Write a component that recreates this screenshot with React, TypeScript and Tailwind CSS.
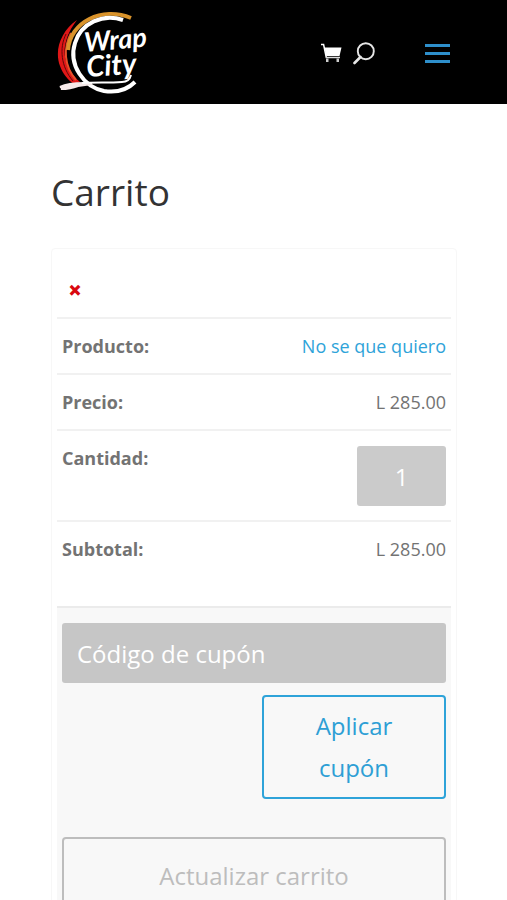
import { useState } from 'react';

interface CartItem {
  name: string;
  price: string;
  subtotal: string;
}

const item: CartItem = {
  name: 'No se que quiero',
  price: 'L 285.00',
  subtotal: 'L 285.00',
};

function Logo() {
  return (
    <svg width="98" height="88" viewBox="57 9 98 88" fill="none" role="img" aria-label="Wrap City">
      {/* red and orange swooshes */}
      <path d="M77 20C61 31 54 50 60 66c3 8 8 14 14 18l6-2C68 72 63 58 65 46c2-11 6-18 12-26Z" fill="#e01717" />
      <path d="M66 34C59 48 61 67 73 81" stroke="#5e0808" strokeWidth="1" />
      <path d="M76 80C64 66 63 48 71 33" stroke="#e8502a" strokeWidth="2" />
      <path d="M68 50C70 22 102 6 131 18" stroke="#d9932b" strokeWidth="4" />
      {/* ring */}
      <path d="M123 20C103 13 81 23 75 43 68 65 84 87 104 91c13 2 24-2 31-9" stroke="#fff" strokeWidth="4" />
      {/* feather */}
      <path d="M60 87c6-3 14-4 24-4l8 1-14 2c-5 2-10 3-17 3l5-2Z" fill="#f6e9e9" stroke="#f6e9e9" strokeWidth="2" />
      <path d="M82 83c13-1 26 0 40-1 5 0 8-3 9-7" stroke="#fff" strokeWidth="2" />
      <g
        fill="#fff"
        fontFamily="Lato, 'Liberation Sans', sans-serif"
        fontStyle="italic"
        fontWeight="700"
      >
        <text x="85" y="52" fontSize="27" transform="rotate(-5 85 52)">Wrap</text>
        <text x="87" y="77" fontSize="29" transform="rotate(-4 87 77)">City</text>
      </g>
    </svg>
  );
}

function CartIcon() {
  return (
    <svg width="22" height="20" viewBox="0 0 22 20" fill="none" aria-hidden="true">
      <path d="M0 1.5h2.6L5.4 15" stroke="#fff" strokeWidth="1.5" />
      <path d="M3.5 4.5H20.5L18.5 13H5.2Z" fill="#fff" />
      <path d="M5 14.5h14" stroke="#ddd" strokeWidth="1.5" />
      <path d="M5 15.5h2.5V19H5ZM15.5 15.5H18V19h-2.5Z" fill="#ccc" />
    </svg>
  );
}

function SearchIcon() {
  return (
    <svg width="22" height="23" viewBox="0 0 22 23" fill="none" stroke="#e6e6e6" aria-hidden="true">
      <circle cx="12.8" cy="9.2" r="8" strokeWidth="1.9" />
      <path d="M7.5 15 1.5 21" strokeWidth="2.6" strokeLinecap="round" />
    </svg>
  );
}

function Header() {
  return (
    <header className="flex h-[104px] items-center justify-between bg-black px-[57px] pt-[2px]">
      <a href="#inicio" aria-label="Wrap City">
        <Logo />
      </a>
      <nav className="flex items-center">
        <a href="#carrito" aria-label="Carrito">
          <CartIcon />
        </a>
        <button type="button" aria-label="Buscar" className="ml-[10px]">
          <SearchIcon />
        </button>
        <button type="button" aria-label="Menú" className="ml-[50px] flex w-[25px] flex-col gap-[5px]">
          <span className="h-[3px] bg-[#2e8fcb]" />
          <span className="h-[3px] bg-[#2e8fcb]" />
          <span className="h-[3px] bg-[#2e8fcb]" />
        </button>
      </nav>
    </header>
  );
}

export default function App() {
  const [quantity, setQuantity] = useState('1');
  const [coupon, setCoupon] = useState('');

  return (
    <div className="min-h-screen bg-white font-['Open_Sans','Noto_Sans',sans-serif] text-[18px] leading-[26px] text-[#737373]">
      <Header />
      <main className="pt-16 pr-[50px] pl-[51px]">
        <h1 className="text-[37px] leading-[48px] text-[#333]">Carrito</h1>
        <form
          className="mt-8 rounded-[4px] border border-[#f7f7f7] p-[5px]"
          onSubmit={(e) => e.preventDefault()}
        >
          <table className="w-full border-separate border-spacing-0">
            <tbody>
              <tr>
                <td colSpan={2} className="h-[65px] border-b-2 border-[#f1f1f1] px-[5px] pt-2">
                  <button
                    type="button"
                    aria-label="Eliminar este artículo"
                    className="block size-[26px] text-center text-[24px] font-extrabold text-[#d9080f]"
                  >
                    ×
                  </button>
                </td>
              </tr>
              <tr>
                <th scope="row" className="border-b-2 border-[#f1f1f1] px-[5px] py-[14px] text-left font-bold">
                  Producto:
                </th>
                <td className="border-b-2 border-[#f1f1f1] px-[5px] py-[14px] text-right">
                  <a href="#producto" className="text-[#2ea3d9]">
                    {item.name}
                  </a>
                </td>
              </tr>
              <tr>
                <th scope="row" className="border-b-2 border-[#f1f1f1] px-[5px] py-[14px] text-left font-bold">
                  Precio:
                </th>
                <td className="border-b-2 border-[#f1f1f1] px-[5px] py-[14px] text-right">{item.price}</td>
              </tr>
              <tr>
                <th
                  scope="row"
                  className="border-b-2 border-[#f1f1f1] px-[5px] py-[14px] text-left align-top font-bold"
                >
                  <label htmlFor="quantity">Cantidad:</label>
                </th>
                <td className="border-b-2 border-[#f1f1f1] px-[5px] pt-[15px] pb-[14px]">
                  <input
                    id="quantity"
                    type="text"
                    inputMode="numeric"
                    value={quantity}
                    onChange={(e) => setQuantity(e.target.value)}
                    className="ml-auto block h-[60px] w-[89px] rounded-[3px] bg-[#cbcbcb] text-center text-[24px] text-white"
                  />
                </td>
              </tr>
              <tr>
                <th
                  scope="row"
                  className="border-b-2 border-[#ebebeb] px-[5px] pt-[14px] pb-[44px] text-left font-bold"
                >
                  Subtotal:
                </th>
                <td className="border-b-2 border-[#ebebeb] px-[5px] pt-[14px] pb-[44px] text-right">
                  {item.subtotal}
                </td>
              </tr>
              <tr>
                <td colSpan={2} className="bg-[#f8f8f8] px-[5px] py-[15px]">
                  <input
                    type="text"
                    aria-label="Código de cupón"
                    placeholder="Código de cupón"
                    value={coupon}
                    onChange={(e) => setCoupon(e.target.value)}
                    className="block h-[60px] w-full rounded-[3px] bg-[#c6c6c6] px-[15px] text-[24px] text-white placeholder:text-white"
                  />
                  <button
                    type="button"
                    className="mt-3 ml-auto block w-[184px] rounded-[4px] border-2 border-[#2ea3d9] px-8 py-2 text-[24px] leading-[42px] text-[#2e9fd5]"
                  >
                    Aplicar cupón
                  </button>
                  <button
                    type="submit"
                    disabled
                    className="mt-[38px] block w-full rounded-[4px] border-2 border-[#bdbdbd] px-8 py-4 text-[24px] leading-[42px] text-[#bdbdbd]"
                  >
                    Actualizar carrito
                  </button>
                </td>
              </tr>
            </tbody>
          </table>
        </form>
      </main>
    </div>
  );
}
